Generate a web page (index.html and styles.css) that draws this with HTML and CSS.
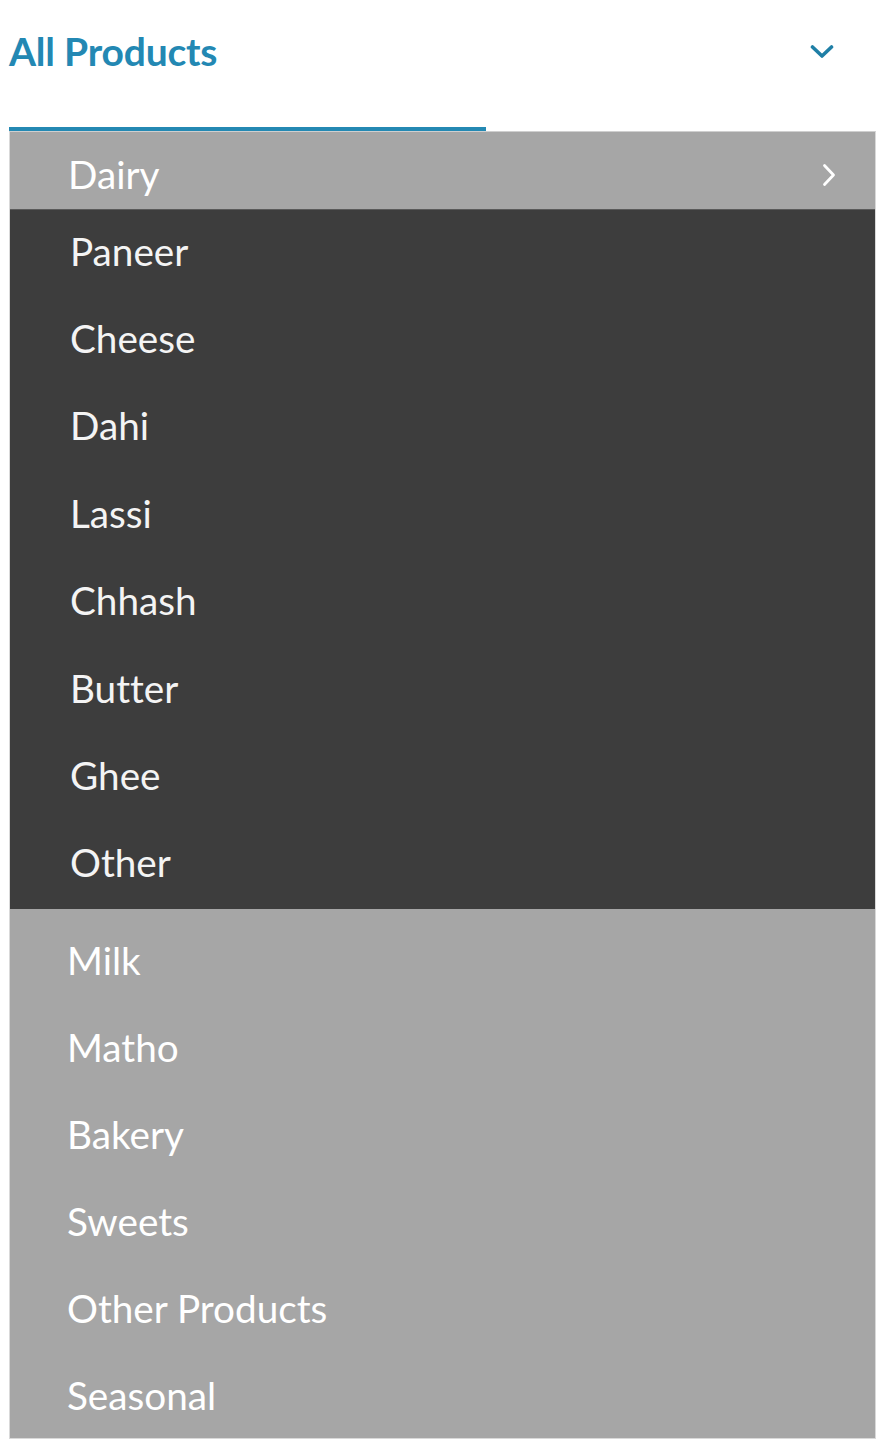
FILE: index.html
```html
<!DOCTYPE html>
<html lang="en">
<head>
<meta charset="utf-8">
<title>All Products</title>
<link rel="stylesheet" href="styles.css">
</head>
<body>
<div class="menu">
  <div class="header">
    <span class="title">All Products</span>
    <svg class="chev-down" width="24" height="16" viewBox="0 0 24 16" aria-hidden="true"><path d="M2.5 3 L12 12 L21.5 3" fill="none" stroke="#1f7fa6" stroke-width="3.6" stroke-linecap="round" stroke-linejoin="round"/></svg>
  </div>
  <div class="tab-line"></div>
  <div class="panel">
    <div class="row parent">
      <span>Dairy</span>
      <svg class="chev-right" width="16" height="24" viewBox="0 0 16 24" aria-hidden="true"><path d="M3.5 2.5 L12.5 12 L3.5 21.5" fill="none" stroke="#ffffff" stroke-width="2.8" stroke-linecap="round" stroke-linejoin="round"/></svg>
    </div>
    <div class="sub">
      <div class="row sub-item">Paneer</div>
      <div class="row sub-item">Cheese</div>
      <div class="row sub-item">Dahi</div>
      <div class="row sub-item">Lassi</div>
      <div class="row sub-item">Chhash</div>
      <div class="row sub-item">Butter</div>
      <div class="row sub-item">Ghee</div>
      <div class="row sub-item">Other</div>
    </div>
    <div class="rest">
      <div class="row item">Milk</div>
      <div class="row item">Matho</div>
      <div class="row item">Bakery</div>
      <div class="row item">Sweets</div>
      <div class="row item">Other Products</div>
      <div class="row item">Seasonal</div>
    </div>
  </div>
</div>
</body>
</html>
```

FILE: styles.css
```css
html, body {
  margin: 0;
  padding: 0;
  background: #ffffff;
}
body {
  font-family: Lato, "Open Sans", "Liberation Sans", sans-serif;
  font-variant-ligatures: none;
}
.menu {
  width: 876px;
}
.header {
  height: 127px;
  display: flex;
  align-items: flex-start;
  justify-content: space-between;
  padding-left: 9px;
  padding-right: 42px;
  box-sizing: border-box;
}
.title {
  font-weight: 700;
  font-size: 39px;
  line-height: 44px;
  margin-top: 29px;
  color: #2388b3;
  letter-spacing: -0.2px;
}
.chev-down {
  margin-top: 44px;
  display: block;
}
.tab-line {
  margin-left: 9px;
  width: 477px;
  height: 4px;
  background: #2489b3;
}
.panel {
  margin-left: 9px;
  width: 867px;
  box-sizing: border-box;
  border: 1px solid #d9d9d9;
  border-top-color: #cfcfcf;
  background: #a6a6a6;
}
.row {
  display: flex;
  align-items: center;
  box-sizing: border-box;
  font-size: 38.7px;
  color: #ffffff;
}
.parent {
  height: 77px;
  padding-left: 58px;
  padding-right: 38px;
  justify-content: space-between;
  padding-top: 6px;
}
.chev-right {
  display: block;
  margin-top: 2px;
}
.sub {
  background: #3d3d3d;
  border-top: 1px solid #5a5a5a;
}
.sub-item {
  height: 87.4px;
  padding-left: 60px;
  padding-bottom: 6px;
  color: #f4f4f4;
}
.rest {
  padding-top: 7px;
}
.item {
  height: 87px;
  padding-left: 57px;
}
```
